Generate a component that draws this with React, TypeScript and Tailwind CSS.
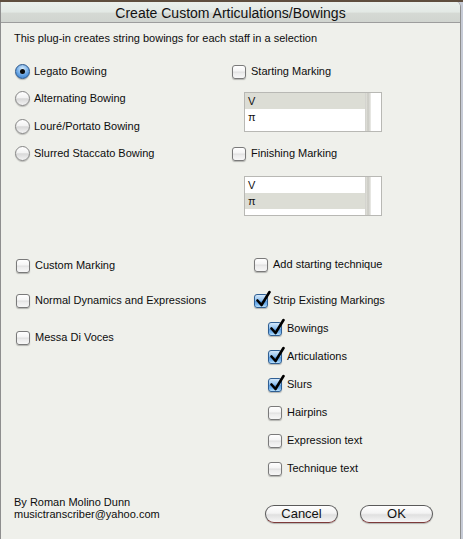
import React from "react";

const font = { fontFamily: '"Liberation Sans", Arial, sans-serif' };

function Check({ checked }: { checked?: boolean }) {
  return (
    <div className="relative w-[15px] h-[15px] shrink-0">
      <div
        className={
          checked
            ? "w-[14px] h-[14px] mt-[1px] rounded-[3px] border border-[#2f5f93] bg-[linear-gradient(#d4e8fa,#8fc0ee_45%,#5b9be0_52%,#7cb8ef_80%,#b9e0fb)] shadow-[0_1px_1px_rgba(0,0,0,0.25)]"
            : "w-[14px] h-[14px] mt-[1px] rounded-[3px] border border-[#7a7a7a] bg-[linear-gradient(#ffffff,#f4f4f4_44%,#d6d6d6_50%,#eaeaea_56%,#f7f7f7)] shadow-[0_1px_1px_rgba(0,0,0,0.25)]"
        }
      />
      {checked && (
        <svg
          className="absolute left-[1px] top-[-3px]"
          width="16"
          height="18"
          viewBox="0 0 16 18"
        >
          <path
            d="M2.5 10.5 L6.5 15 L14.5 2"
            stroke="#000"
            strokeWidth="2.6"
            fill="none"
            strokeLinecap="round"
            strokeLinejoin="round"
          />
        </svg>
      )}
    </div>
  );
}

function Radio({ on }: { on?: boolean }) {
  return (
    <div
      className={
        on
          ? "w-[15px] h-[15px] rounded-full border border-[#2a568a] bg-[radial-gradient(circle_at_50%_30%,#d8ecfb,#5f9fe2_60%,#3579c8)] flex items-center justify-center shrink-0 shadow-[0_1px_1px_rgba(0,0,0,0.25)]"
          : "w-[15px] h-[15px] rounded-full border border-[#858585] bg-[linear-gradient(#ffffff,#f2f2f2_45%,#d8d8d8_52%,#f3f3f3)] shrink-0 shadow-[0_1px_1px_rgba(0,0,0,0.22)]"
      }
    >
      {on && <div className="w-[5px] h-[5px] rounded-full bg-[#0a0a0a]" />}
    </div>
  );
}

function Row({
  children,
  label,
  className = "",
}: {
  children: React.ReactNode;
  label: string;
  className?: string;
}) {
  return (
    <div className={`flex items-center h-[16px] gap-[4px] ${className}`}>
      {children}
      <span className="text-[11px] leading-[14px] text-[#0d0d0d] whitespace-nowrap">{label}</span>
    </div>
  );
}

function ListBox({ sel, className = "" }: { sel: number; className?: string }) {
  const items = ["V", "π"];
  return (
    <div className={`w-[138px] h-[40px] border border-[#b8b8b4] bg-white flex ${className}`}>
      <div className="flex-1 flex flex-col">
        {items.map((t, i) => (
          <div
            key={t}
            className={`h-[16px] pl-[3px] text-[11px] leading-[16px] text-[#111] ${
              i === sel ? "bg-[#dcddd5]" : ""
            }`}
          >
            {t}
          </div>
        ))}
      </div>
      <div className="w-[16px] flex">
        <div className="w-[5px] bg-[linear-gradient(90deg,#e2e2dc,#c9c9c2,#dededa)] border-l border-[#d4d4cf]" />
        <div className="flex-1 bg-white border-l border-[#e6e6e2]" />
      </div>
    </div>
  );
}

function Button({ label }: { label: string }) {
  return (
    <div className="w-[73px] h-[18px] rounded-full border border-[#5a5a5a] border-b-[#7d3a3a] bg-[linear-gradient(#ffffff,#f3f3f3_45%,#e0e0e0_55%,#f6f6f6)] shadow-[0_1px_1px_rgba(0,0,0,0.25)] flex items-center justify-center text-[13px] leading-[16px] text-[#111]">
      {label}
    </div>
  );
}

export default function App() {
  return (
    <div className="w-[463px] h-[539px] bg-[#c6cbd6] flex flex-col overflow-hidden" style={font}>
      <div className="h-[2px] bg-[#5e4e3e] shrink-0" />
      <div className="w-[461px] flex-1 border-l border-r border-[#8e8e8e] rounded-tr-[5px] flex flex-col bg-[#eff0eb] overflow-hidden">
        <div className="h-[21px] shrink-0 border-b border-[#9d9d9d] bg-[linear-gradient(#eaf0ec,#e3e9e5_50%,#d5d9d4_56%,#d1d5d0)] flex items-center justify-center">
          <span className="text-[14px] leading-[20px] text-[#111] pt-[1px]">
            Create Custom Articulations/Bowings
          </span>
        </div>

        <div className="pt-[8px] pl-[13px] h-[23px] text-[11px] leading-[14px] text-[#0d0d0d]">
          This plug-in creates string bowings for each staff in a selection
        </div>

        {/* top section */}
        <div className="flex h-[170px]">
          <div className="w-[231px] pl-[14px] flex flex-col">
            <Row label="Legato Bowing" className="mt-[17px]">
              <Radio on />
            </Row>
            <Row label="Alternating Bowing" className="mt-[11px]">
              <Radio />
            </Row>
            <Row label="Louré/Portato Bowing" className="mt-[12px]">
              <Radio />
            </Row>
            <Row label="Slurred Staccato Bowing" className="mt-[11px]">
              <Radio />
            </Row>
          </div>
          <div className="flex flex-col">
            <Row label="Starting Marking" className="mt-[17px]">
              <Check />
            </Row>
            <ListBox sel={0} className="mt-[13px] ml-[12px]" />
            <Row label="Finishing Marking" className="mt-[13px]">
              <Check />
            </Row>
            <ListBox sel={1} className="mt-[15px] ml-[12px]" />
          </div>
        </div>

        {/* middle section */}
        <div className="flex h-[260px]">
          <div className="w-[253px] pl-[15px] flex flex-col">
            <Row label="Custom Marking" className="mt-[41px]">
              <Check />
            </Row>
            <Row label="Normal Dynamics and Expressions" className="mt-[19px]">
              <Check />
            </Row>
            <Row label="Messa Di Voces" className="mt-[21px]">
              <Check />
            </Row>
          </div>
          <div className="flex flex-col">
            <Row label="Add starting technique" className="mt-[40px]">
              <Check />
            </Row>
            <Row label="Strip Existing Markings" className="mt-[20px]">
              <Check checked />
            </Row>
            <div className="ml-[14px] flex flex-col">
              <Row label="Bowings" className="mt-[12px]">
                <Check checked />
              </Row>
              <Row label="Articulations" className="mt-[12px]">
                <Check checked />
              </Row>
              <Row label="Slurs" className="mt-[12px]">
                <Check checked />
              </Row>
              <Row label="Hairpins" className="mt-[12px]">
                <Check />
              </Row>
              <Row label="Expression text" className="mt-[12px]">
                <Check />
              </Row>
              <Row label="Technique text" className="mt-[12px]">
                <Check />
              </Row>
            </div>
          </div>
        </div>

        {/* footer */}
        <div className="flex pt-[20px]">
          <div className="w-[264px] pl-[13px] text-[11px] leading-[12px] text-[#0d0d0d]">
            <div>By Roman Molino Dunn</div>
            <div>musictranscriber@yahoo.com</div>
          </div>
          <div className="flex gap-[22px] mt-[9px]">
            <Button label="Cancel" />
            <Button label="OK" />
          </div>
        </div>
      </div>
    </div>
  );
}
